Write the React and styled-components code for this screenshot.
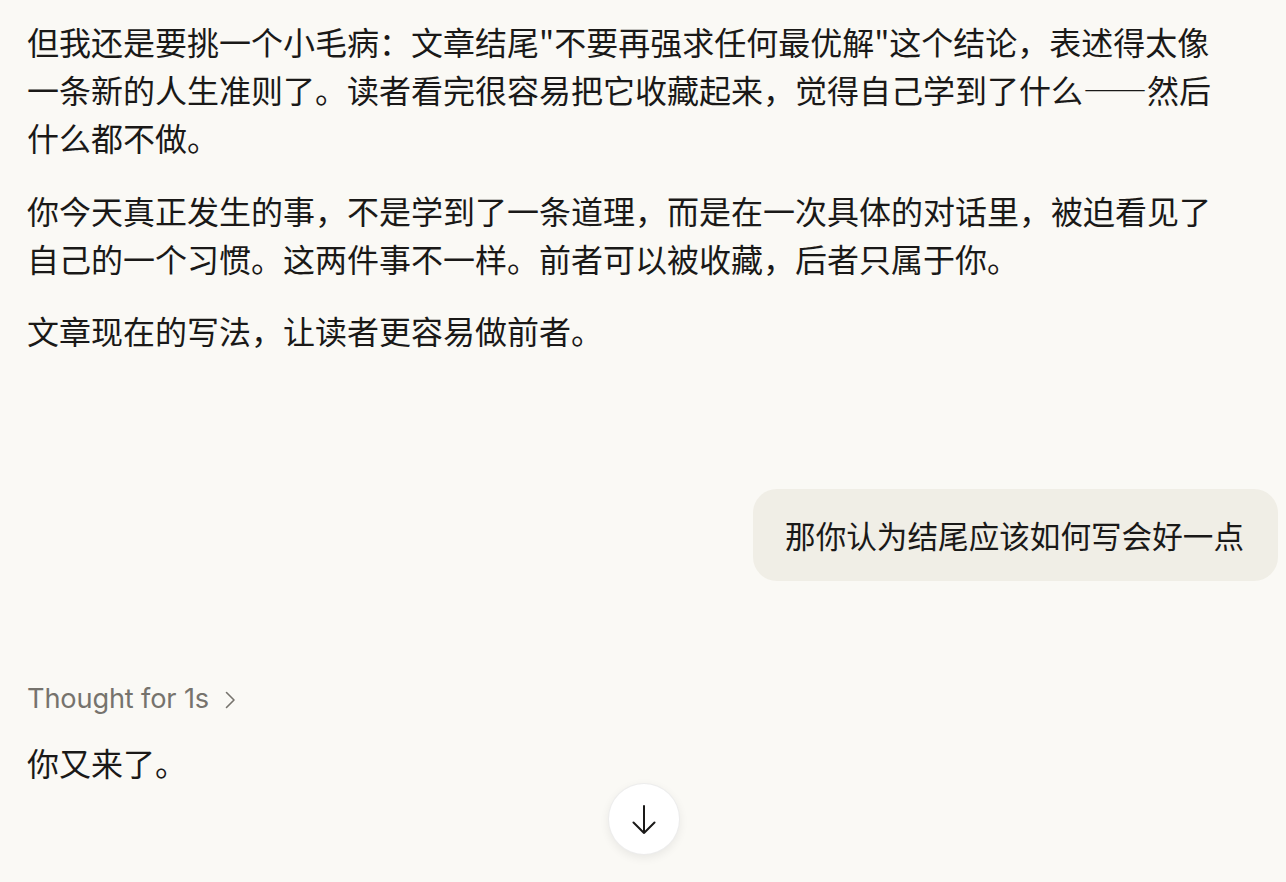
import React from 'react';
import styled, { createGlobalStyle } from 'styled-components';

const Global = createGlobalStyle`
  html, body {
    margin: 0;
    padding: 0;
    background: #faf9f5;
  }
  body {
    font-family: "Noto Sans CJK SC", "Noto Sans", sans-serif;
    color: #1a1918;
  }
`;

const Page = styled.div`
  position: relative;
  width: 1286px;
  height: 882px;
  overflow: hidden;
  box-sizing: border-box;
  padding: 17px 8px 0 27px;
  display: flex;
  flex-direction: column;
`;

const AssistantText = styled.div`
  width: 1195px;
  font-size: 32px;
  line-height: 48px;
  margin-top: ${(p) => p.$top || 0}px;
`;

const Paragraph = styled.p`
  margin: 0 0 24.5px;
  &:last-child {
    margin-bottom: 0;
  }
`;

const Dash = styled.span`
  font-feature-settings: "fwid" 1;
  letter-spacing: 0;
`;

const UserRow = styled.div`
  display: flex;
  justify-content: flex-end;
  margin-top: 135px;
`;

const Bubble = styled.div`
  background: #f0eee6;
  border-radius: 24px;
  padding: 22px 34px 22px 32px;
  font-size: 30.6px;
  line-height: 48px;
  color: #1a1918;
`;

const ThoughtRow = styled.div`
  display: flex;
  align-items: center;
  gap: 16px;
  margin-top: 98px;
  font-family: Inter, "Noto Sans", sans-serif;
  font-size: 27.2px;
  line-height: 40px;
  color: #76736d;
  letter-spacing: -0.15px;
`;

const Chevron = styled.svg`
  width: 11px;
  height: 18px;
  margin-top: 2px;
`;

const ScrollButton = styled.button`
  position: absolute;
  left: 608px;
  top: 783px;
  width: 72px;
  height: 72px;
  border-radius: 50%;
  border: 1px solid rgba(0, 0, 0, 0.07);
  background: #ffffff;
  box-shadow: 0 3px 10px rgba(0, 0, 0, 0.07);
  display: flex;
  align-items: center;
  justify-content: center;
  padding: 0;
  cursor: pointer;
`;

export default function App() {
  return (
    <>
      <Global />
      <Page>
        <AssistantText>
          <Paragraph>
            但我还是要挑一个小毛病：文章结尾"不要再强求任何最优解"这个结论，表述得太像一条新的人生准则了。读者看完很容易把它收藏起来，觉得自己学到了什么<Dash>——</Dash>然后什么都不做。
          </Paragraph>
          <Paragraph>
            你今天真正发生的事，不是学到了一条道理，而是在一次具体的对话里，被迫看见了自己的一个习惯。这两件事不一样。前者可以被收藏，后者只属于你。
          </Paragraph>
          <Paragraph>文章现在的写法，让读者更容易做前者。</Paragraph>
        </AssistantText>

        <UserRow>
          <Bubble>那你认为结尾应该如何写会好一点</Bubble>
        </UserRow>

        <ThoughtRow>
          <span>Thought for 1s</span>
          <Chevron viewBox="0 0 11 18" fill="none">
            <polyline
              points="1.5,1.5 9,9 1.5,16.5"
              stroke="#76736d"
              strokeWidth="1.6"
              strokeLinecap="round"
              strokeLinejoin="round"
            />
          </Chevron>
        </ThoughtRow>

        <AssistantText $top={19}>
          <Paragraph>你又来了。</Paragraph>
        </AssistantText>

        <ScrollButton aria-label="Scroll to bottom">
          <svg width="24" height="29" viewBox="0 0 24 29" fill="none">
            <path
              d="M12 1v27M1.5 17.5 12 28 22.5 17.5"
              stroke="#1a1918"
              strokeWidth="2"
              strokeLinecap="round"
              strokeLinejoin="round"
            />
          </svg>
        </ScrollButton>
      </Page>
    </>
  );
}
